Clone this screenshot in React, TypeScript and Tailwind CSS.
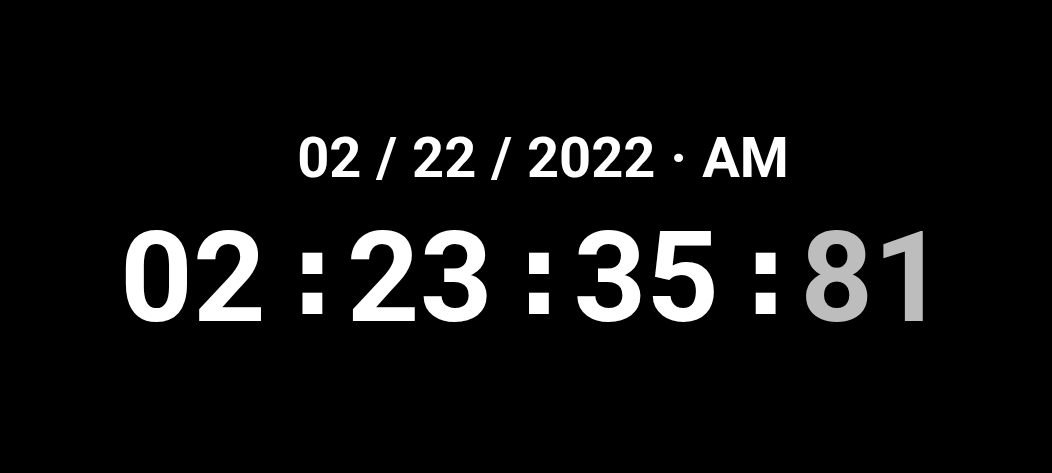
function Colon() {
  return (
    <span className="ml-[36px] mr-[24px] flex w-[21px] justify-center pb-[6px] font-['DejaVu_Sans',sans-serif] text-[112px] leading-none">:</span>
  );
}

export default function App() {
  return (
    <div className="flex h-[473px] w-full flex-col items-center justify-center bg-black font-['Roboto',sans-serif] font-bold text-white">
      <div className="mt-[-2px] pl-[34px] text-[56px] leading-none [word-spacing:1px]">02 / 22 / 2022 · AM</div>
      <div className="mt-[28px] flex items-center pl-[14px] text-[127px] leading-none">
        <span>02</span>
        <Colon />
        <span>23</span>
        <Colon />
        <span>35</span>
        <Colon />
        <span className="text-[#bdbdbd]">81</span>
      </div>
    </div>
  );
}
